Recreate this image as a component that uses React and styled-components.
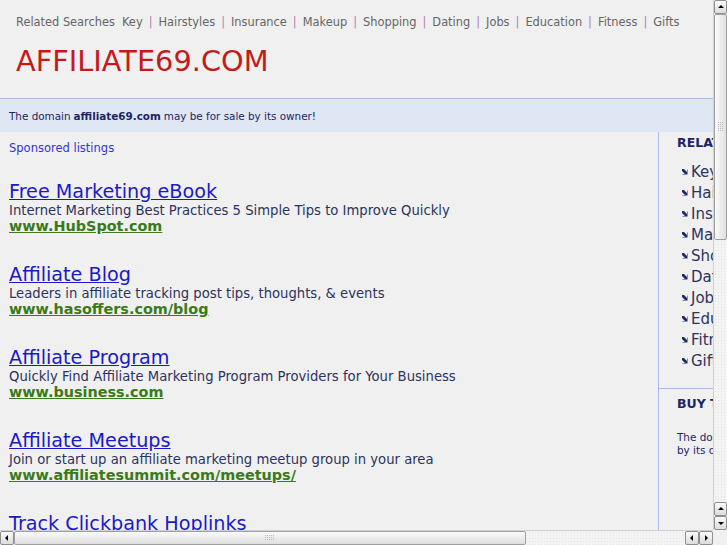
import styled, { createGlobalStyle } from 'styled-components'

const GlobalStyle = createGlobalStyle`
  html, body {
    margin: 0;
    padding: 0;
    background: #f0f0f0;
  }
  body {
    font-family: 'DejaVu Sans', Verdana, sans-serif;
  }
`

const related = [
  'Key',
  'Hairstyles',
  'Insurance',
  'Makeup',
  'Shopping',
  'Dating',
  'Jobs',
  'Education',
  'Fitness',
  'Gifts',
]

const listings = [
  {
    title: 'Free Marketing eBook',
    desc: 'Internet Marketing Best Practices 5 Simple Tips to Improve Quickly',
    url: 'www.HubSpot.com',
  },
  {
    title: 'Affiliate Blog',
    desc: 'Leaders in affiliate tracking post tips, thoughts, & events',
    url: 'www.hasoffers.com/blog',
  },
  {
    title: 'Affiliate Program',
    desc: 'Quickly Find Affiliate Marketing Program Providers for Your Business',
    url: 'www.business.com',
  },
  {
    title: 'Affiliate Meetups',
    desc: 'Join or start up an affiliate marketing meetup group in your area',
    url: 'www.affiliatesummit.com/meetups/',
  },
  {
    title: 'Track Clickbank Hoplinks',
    desc: 'Track and optimize your Clickbank hoplinks with real-time stats',
    url: 'www.hoptracker.com',
  },
]

function Arrow({ dir }) {
  const pts = {
    up: '2,6 8,6 5,3',
    down: '2,4 8,4 5,7',
    left: '6,2 6,8 3,5',
    right: '4,2 4,8 7,5',
  }
  return (
    <svg width="10" height="10" viewBox="0 0 10 10">
      <polygon points={pts[dir]} fill="#000" />
    </svg>
  )
}

function Grip({ vertical }) {
  const dots = []
  for (let r = 0; r < (vertical ? 5 : 3); r++) {
    for (let c = 0; c < (vertical ? 3 : 5); c++) {
      dots.push(<rect key={r + '-' + c} x={c * 2} y={r * 2} width="1" height="1" fill="#b8b8b8" />)
    }
  }
  return (
    <svg width={vertical ? 6 : 10} height={vertical ? 10 : 6}>
      {dots}
    </svg>
  )
}

function Bullet() {
  return (
    <svg width="7" height="7" viewBox="0 0 7 7">
      <polygon points="1,1 3,1 6,4 6,1.5 6.5,1.5 6.5,6.5 1.5,6.5 1.5,6 4,6 1,3" fill="#1f2a6a" />
    </svg>
  )
}

export default function App() {
  return (
    <>
      <GlobalStyle />
      <Viewport>
        <Page>
          <Canvas>
            <Nav>
              <NavLabel>Related Searches</NavLabel>
              {related.map((r, i) => (
                <NavItem key={r}>
                  {i > 0 && <Sep>|</Sep>}
                  {r}
                </NavItem>
              ))}
            </Nav>
            <Title>AFFILIATE69.COM</Title>
            <Banner>
              The domain <b>affiliate69.com</b> may be for sale by its owner!
            </Banner>
            <Body>
              <Main>
                <Sponsored>Sponsored listings</Sponsored>
                {listings.map((l) => (
                  <Listing key={l.title}>
                    <ListingTitle>{l.title}</ListingTitle>
                    <ListingDesc>{l.desc}</ListingDesc>
                    <ListingUrl>{l.url}</ListingUrl>
                  </Listing>
                ))}
              </Main>
              <Side>
                <SideBlock>
                  <SideHeading>RELATED SEARCHES</SideHeading>
                  <SideList>
                    {related.map((r) => (
                      <SideItem key={r}>
                        <Bullet />
                        <span>{r}</span>
                      </SideItem>
                    ))}
                  </SideList>
                </SideBlock>
                <SideBlock $bordered>
                  <SideHeading>BUY THIS DOMAIN</SideHeading>
                  <SideText>
                    The domain affiliate69.com may be for sale
                    <br />
                    by its owner!
                  </SideText>
                </SideBlock>
              </Side>
            </Body>
          </Canvas>
        </Page>
        <VScroll>
          <ScrollButton><Arrow dir="up" /></ScrollButton>
          <VThumb><Grip vertical /></VThumb>
          <Track />
          <ScrollButton><Arrow dir="up" /></ScrollButton>
          <ScrollButton><Arrow dir="down" /></ScrollButton>
        </VScroll>
        <HScroll>
          <ScrollButton><Arrow dir="left" /></ScrollButton>
          <HThumb><Grip /></HThumb>
          <Track />
          <ScrollButton><Arrow dir="left" /></ScrollButton>
          <ScrollButton><Arrow dir="right" /></ScrollButton>
        </HScroll>
        <Corner />
      </Viewport>
    </>
  )
}

const Viewport = styled.div`
  width: 727px;
  height: 545px;
  display: grid;
  grid-template-columns: 713px 14px;
  grid-template-rows: 530px 15px;
  overflow: hidden;
  background: #f0f0f0;
`

const Page = styled.div`
  overflow: hidden;
`

const Canvas = styled.div`
  width: 900px;
`

const Nav = styled.div`
  display: flex;
  align-items: center;
  padding: 13px 0 0 16px;
  height: 17px;
  font-size: 11.4px;
  color: #666;
  white-space: nowrap;
`

const NavLabel = styled.span`
  margin-right: 7px;
`

const NavItem = styled.span``

const Sep = styled.span`
  color: #b080b0;
  margin: 0 6px;
`

const Title = styled.h1`
  margin: 0;
  padding: 14px 0 0 16px;
  height: 54px;
  font-size: 28.8px;
  font-weight: normal;
  color: #c41a1a;
  line-height: 34px;
`

const Banner = styled.div`
  border-top: 1px solid #a9bde6;
  background: #dfe6f4;
  height: 33px;
  padding-left: 9px;
  display: flex;
  align-items: center;
  font-size: 10.4px;
  color: #1c2566;
  b {
    margin: 0 3px;
  }
`

const Body = styled.div`
  display: flex;
  align-items: stretch;
`

const Main = styled.div`
  width: 649px;
  padding: 0 0 0 9px;
  border-right: 1px solid #a9bde6;
  min-height: 420px;
`

const Sponsored = styled.div`
  font-size: 11.5px;
  color: #3333dd;
  padding-top: 9px;
  height: 40px;
`

const Listing = styled.div`
  height: 83px;
`

const ListingTitle = styled.a`
  display: block;
  font-size: 19.2px;
  line-height: 22px;
  color: #1a1ac8;
  text-decoration: underline;
  width: max-content;
`

const ListingDesc = styled.div`
  font-size: 13.2px;
  line-height: 15px;
  color: #2d335e;
  white-space: nowrap;
`

const ListingUrl = styled.a`
  display: block;
  font-size: 14.4px;
  line-height: 17px;
  font-weight: bold;
  color: #3a7a1a;
  text-decoration: underline;
  width: max-content;
`

const Side = styled.div`
  width: 240px;
`

const SideBlock = styled.div`
  padding: ${({ $bordered }) => ($bordered ? '7px 0 60px 18px' : '3px 0 17px 18px')};
  border-top: ${({ $bordered }) => ($bordered ? '1px solid #a9bde6' : 'none')};
`

const SideHeading = styled.div`
  font-size: 12.5px;
  font-weight: bold;
  color: #1c2566;
  line-height: 16px;
`

const SideList = styled.div`
  padding: 10px 0 0 4px;
`

const SideItem = styled.div`
  display: flex;
  align-items: center;
  gap: 3px;
  height: 21px;
  font-size: 15px;
  color: #2d335e;
`

const SideText = styled.div`
  margin-top: 19px;
  font-size: 10.4px;
  line-height: 13px;
  color: #1c2566;
  white-space: nowrap;
`

const ScrollBar = styled.div`
  display: flex;
  background-color: #f4f4f4;
  background-image: radial-gradient(#e2e2e2 0.6px, transparent 0.7px);
  background-size: 3px 3px;
`

const VScroll = styled(ScrollBar)`
  flex-direction: column;
  border-left: 1px solid #d0d0d0;
`

const HScroll = styled(ScrollBar)`
  flex-direction: row;
  border-top: 1px solid #d0d0d0;
`

const ScrollButton = styled.div`
  flex: 0 0 14px;
  height: 14px;
  box-sizing: border-box;
  border: 1px solid #8e8e8e;
  border-radius: 2px;
  background: linear-gradient(#fafafa, #dcdcdc);
  display: flex;
  align-items: center;
  justify-content: center;
`

const Thumb = styled.div`
  box-sizing: border-box;
  border: 1px solid #a0a0a0;
  border-radius: 2px;
  display: flex;
  align-items: center;
  justify-content: center;
`

const VThumb = styled(Thumb)`
  height: 226px;
  background: linear-gradient(90deg, #fafafa, #e0e0e0);
`

const HThumb = styled(Thumb)`
  width: 512px;
  background: linear-gradient(#fafafa, #dedede);
`

const Track = styled.div`
  flex: 1;
`

const Corner = styled.div`
  background: #f0f0f0;
`
